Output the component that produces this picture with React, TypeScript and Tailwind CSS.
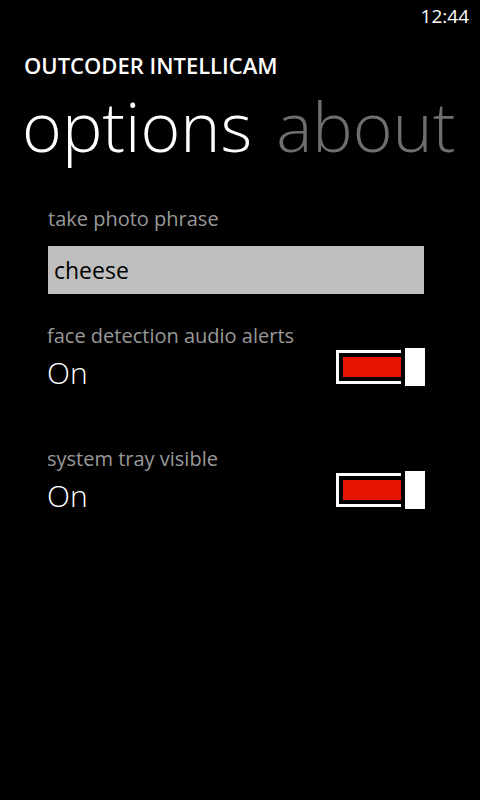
import { useState } from "react";

function Toggle({ on }: { on: boolean }) {
    return (
        <div className="flex items-center h-[38px]">
            <div className="w-[65px] h-[34px] border-[3px] border-r-0 border-white pl-[4px] py-[4px]">
                <div className={on ? "w-full h-full bg-[#e51400]" : "w-full h-full bg-black"} />
            </div>
            <div className="w-[20px] h-[38px] bg-white ml-[4px]" />
        </div>
    );
}

function ToggleRow({ label, on }: { label: string; on: boolean }) {
    return (
        <div className="flex items-end justify-between pl-[47px] pr-[55px]">
            <div>
                <div className="text-[20px] leading-[28px] text-[#999999]">{label}</div>
                <div className="text-[30px] leading-[46px] font-light text-white">{on ? "On" : "Off"}</div>
            </div>
            <div className="mb-[10px]">
                <Toggle on={on} />
            </div>
        </div>
    );
}

export default function App() {
    const [phrase] = useState("cheese");

    return (
        <div className="w-[480px] h-[800px] bg-black overflow-hidden" style={{ fontFamily: '"Open Sans", "Noto Sans", sans-serif' }}>
            {/* system tray */}
            <div className="h-[32px] flex justify-end items-center pr-[11px]">
                <span className="text-[19px] text-white">12:44</span>
            </div>

            {/* app title */}
            <div className="pl-[24px] pt-[18px] text-[22px] leading-[30px] font-semibold text-white">
                OUTCODER INTELLICAM
            </div>

            {/* pivot headers */}
            <div className="mt-[6px] flex items-baseline gap-[24px] pl-[22px] text-[68px] leading-[80px] font-light">
                <span className="text-white">options</span>
                <span className="text-[#6e6e6e]">about</span>
            </div>

            {/* settings */}
            <div className="pt-[39px]">
                <div className="pl-[48px] pr-[56px]">
                    <div className="text-[20px] leading-[28px] text-[#999999]">take photo phrase</div>
                    <div className="mt-[13px] h-[48px] bg-[#bfbfbf] flex items-center pl-[6px]">
                        <span className="text-[23px] text-black">{phrase}</span>
                    </div>
                </div>

                <div className="mt-[28px]">
                    <ToggleRow label="face detection audio alerts" on={true} />
                </div>
                <div className="mt-[49px]">
                    <ToggleRow label="system tray visible" on={true} />
                </div>
            </div>
        </div>
    );
}
